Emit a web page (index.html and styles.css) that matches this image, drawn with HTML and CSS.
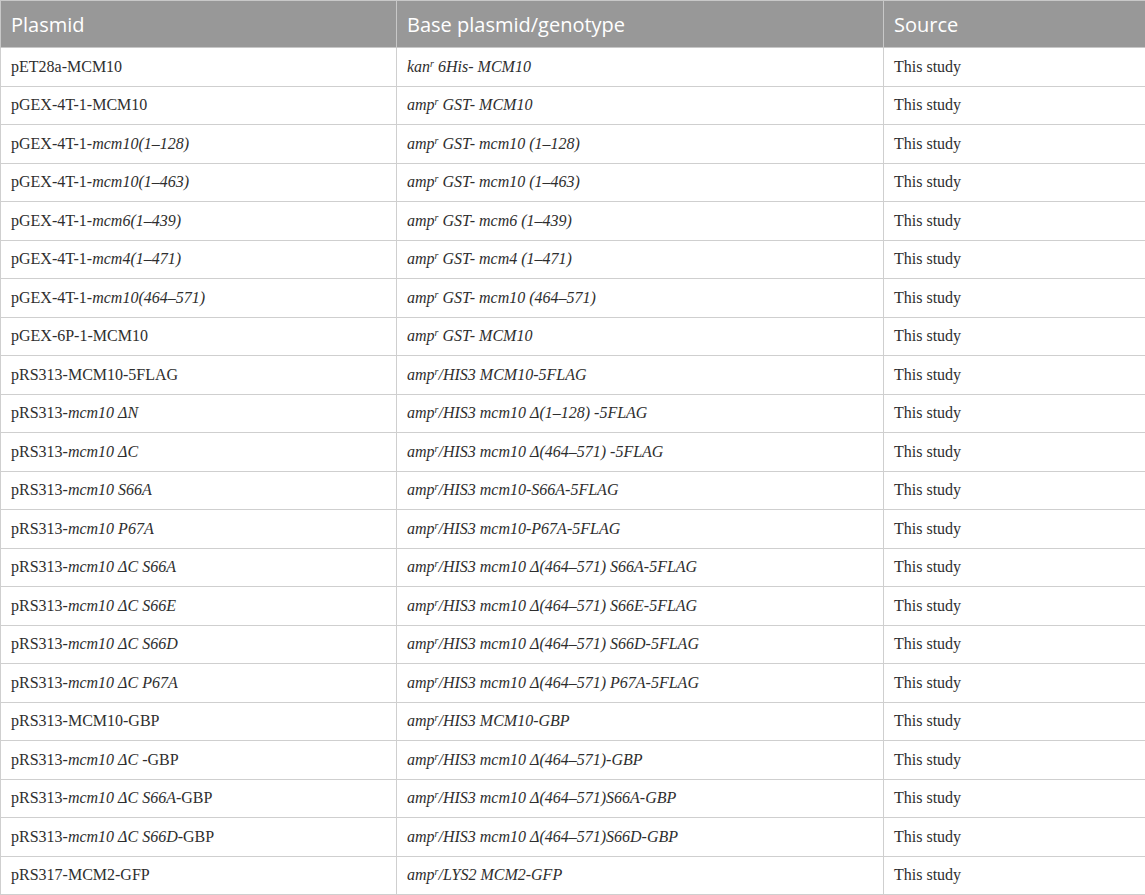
FILE: index.html
```html
<!DOCTYPE html>
<html>
<head>
<meta charset="utf-8">
<link rel="stylesheet" href="styles.css">
</head>
<body>
<table class="plasmids">
<colgroup><col class="c1"><col class="c2"><col class="c3"></colgroup>
<thead>
<tr><th>Plasmid</th><th>Base plasmid/genotype</th><th>Source</th></tr>
</thead>
<tbody>
<tr><td>pET28a-MCM10</td><td class="g">kan<sup>r</sup> 6His- MCM10</td><td>This study</td></tr>
<tr><td>pGEX-4T-1-MCM10</td><td class="g">amp<sup>r</sup> GST- MCM10</td><td>This study</td></tr>
<tr><td>pGEX-4T-1-<i>mcm10(1–128)</i></td><td class="g">amp<sup>r</sup> GST- mcm10 (1–128)</td><td>This study</td></tr>
<tr><td>pGEX-4T-1-<i>mcm10(1–463)</i></td><td class="g">amp<sup>r</sup> GST- mcm10 (1–463)</td><td>This study</td></tr>
<tr><td>pGEX-4T-1-<i>mcm6(1–439)</i></td><td class="g">amp<sup>r</sup> GST- mcm6 (1–439)</td><td>This study</td></tr>
<tr><td>pGEX-4T-1-<i>mcm4(1–471)</i></td><td class="g">amp<sup>r</sup> GST- mcm4 (1–471)</td><td>This study</td></tr>
<tr><td>pGEX-4T-1-<i>mcm10(464–571)</i></td><td class="g">amp<sup>r</sup> GST- mcm10 (464–571)</td><td>This study</td></tr>
<tr><td>pGEX-6P-1-MCM10</td><td class="g">amp<sup>r</sup> GST- MCM10</td><td>This study</td></tr>
<tr><td>pRS313-MCM10-5FLAG</td><td class="g">amp<sup>r</sup>/HIS3 MCM10-5FLAG</td><td>This study</td></tr>
<tr><td>pRS313-<i>mcm10 ΔN</i></td><td class="g">amp<sup>r</sup>/HIS3 mcm10 Δ(1–128) -5FLAG</td><td>This study</td></tr>
<tr><td>pRS313-<i>mcm10 ΔC</i></td><td class="g">amp<sup>r</sup>/HIS3 mcm10 Δ(464–571) -5FLAG</td><td>This study</td></tr>
<tr><td>pRS313-<i>mcm10 S66A</i></td><td class="g">amp<sup>r</sup>/HIS3 mcm10-S66A-5FLAG</td><td>This study</td></tr>
<tr><td>pRS313-<i>mcm10 P67A</i></td><td class="g">amp<sup>r</sup>/HIS3 mcm10-P67A-5FLAG</td><td>This study</td></tr>
<tr><td>pRS313-<i>mcm10 ΔC S66A</i></td><td class="g">amp<sup>r</sup>/HIS3 mcm10 Δ(464–571) S66A-5FLAG</td><td>This study</td></tr>
<tr><td>pRS313-<i>mcm10 ΔC S66E</i></td><td class="g">amp<sup>r</sup>/HIS3 mcm10 Δ(464–571) S66E-5FLAG</td><td>This study</td></tr>
<tr><td>pRS313-<i>mcm10 ΔC S66D</i></td><td class="g">amp<sup>r</sup>/HIS3 mcm10 Δ(464–571) S66D-5FLAG</td><td>This study</td></tr>
<tr><td>pRS313-<i>mcm10 ΔC P67A</i></td><td class="g">amp<sup>r</sup>/HIS3 mcm10 Δ(464–571) P67A-5FLAG</td><td>This study</td></tr>
<tr><td>pRS313-MCM10-GBP</td><td class="g">amp<sup>r</sup>/HIS3 MCM10-GBP</td><td>This study</td></tr>
<tr><td>pRS313-<i>mcm10 ΔC</i> -GBP</td><td class="g">amp<sup>r</sup>/HIS3 mcm10 Δ(464–571)-GBP</td><td>This study</td></tr>
<tr><td>pRS313-<i>mcm10 ΔC S66A</i>-GBP</td><td class="g">amp<sup>r</sup>/HIS3 mcm10 Δ(464–571)S66A-GBP</td><td>This study</td></tr>
<tr><td>pRS313-<i>mcm10 ΔC S66D</i>-GBP</td><td class="g">amp<sup>r</sup>/HIS3 mcm10 Δ(464–571)S66D-GBP</td><td>This study</td></tr>
<tr><td>pRS317-MCM2-GFP</td><td class="g">amp<sup>r</sup>/LYS2 MCM2-GFP</td><td>This study</td></tr>
</tbody>
</table>
</body>
</html>
```

FILE: styles.css
```css
html, body {
  margin: 0;
  padding: 0;
  background: #fff;
}
.plasmids {
  width: 1145px;
  border-collapse: collapse;
  table-layout: fixed;
  font-family: "Liberation Serif", "Times New Roman", serif;
  font-size: 16px;
  color: #2e2e2e;
}
.c1 { width: 396px; }
.c2 { width: 487px; }
.c3 { width: 262px; }
.plasmids th {
  background: #989898;
  color: #fff;
  font-family: "Open Sans", "Liberation Sans", sans-serif;
  font-weight: normal;
  font-size: 20px;
  text-align: left;
  height: 47px;
  padding: 0 10px;
  border: 1px solid #c8c8c8;
  box-sizing: border-box;
}
.plasmids td {
  height: 38.5px;
  padding: 0 10px;
  border: 1px solid #cfcfcf;
  box-sizing: border-box;
  vertical-align: middle;
  white-space: nowrap;
}
.plasmids td.g {
  font-style: italic;
}
.plasmids sup {
  font-size: 10px;
  line-height: 0;
  vertical-align: 5px;
}
```
